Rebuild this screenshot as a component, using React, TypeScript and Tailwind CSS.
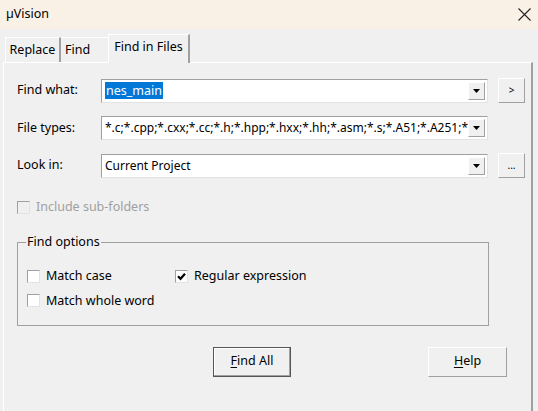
import React from "react";

// Find in Files dialog, classic Win32 look
const font = { fontFamily: '"Noto Sans", "Liberation Sans", sans-serif' };

const DropArrow = () => (
  <div className="w-[17px] h-full shrink-0 flex items-center justify-center bg-[#f0f0f0] border-t border-l border-t-white border-l-white border-b border-r border-b-[#a0a0a0] border-r-[#a0a0a0]">
    <svg width="7" height="4" viewBox="0 0 7 4">
      <path d="M0 0 H7 L3.5 4 Z" fill="#000" />
    </svg>
  </div>
);

const Combo = ({ children }: { children: React.ReactNode }) => (
  <div className="w-[387px] h-[24px] flex bg-white border border-t-[#a0a0a0] border-l-[#a0a0a0] border-b-[#e3e3e3] border-r-[#e3e3e3] p-[2px]">
    <div className="flex-1 flex items-center pl-[1px] overflow-hidden whitespace-nowrap text-[12px] text-black">
      {children}
    </div>
    <DropArrow />
  </div>
);

const SmallButton = ({ label }: { label: string }) => (
  <div className="ml-[10px] w-[27px] h-[25px] flex items-center justify-center bg-[#f0f0f0] border border-t-white border-l-white border-b-[#a0a0a0] border-r-[#a0a0a0] text-[10px] text-black">
    {label}
  </div>
);

const Check = ({
  checked,
  disabled,
  label,
}: {
  checked?: boolean;
  disabled?: boolean;
  label: string;
}) => (
  <div className="flex items-center">
    <div
      className={
        "w-[13px] h-[13px] flex items-center justify-center border border-t-[#a0a0a0] border-l-[#a0a0a0] border-b-[#e3e3e3] border-r-[#e3e3e3] " +
        (disabled ? "bg-[#f0f0f0]" : "bg-white")
      }
    >
      {checked && (
        <svg width="9" height="9" viewBox="0 0 9 9">
          <path d="M1 4.2 L3.5 6.8 L8 1.8" stroke="#000" strokeWidth="2.2" fill="none" />
        </svg>
      )}
    </div>
    <span
      className={
        "ml-[6px] text-[12.5px] " + (disabled ? "text-[#a0a0a0]" : "text-black")
      }
    >
      {label}
    </span>
  </div>
);

export default function App() {
  return (
    <div className="w-[538px] h-[411px] bg-[#f0f0f0] flex flex-col overflow-hidden" style={font}>
      {/* Title bar */}
      <div className="h-[29px] shrink-0 bg-[#f9f1e6] flex items-center justify-between pl-[6px] pr-[7px]">
        <span className="text-[12.5px] text-black">µVision</span>
        <svg width="13" height="13" viewBox="0 0 13 13">
          <path d="M0.5 0.5 L12.5 12.5 M12.5 0.5 L0.5 12.5" stroke="#222" strokeWidth="1.1" />
        </svg>
      </div>

      {/* Tabs */}
      <div className="h-[33px] shrink-0 flex items-end pl-[5px]">
        <div className="h-[25px] w-[56px] flex items-center justify-center bg-[#f0f0f0] border-t border-l border-t-white border-l-white border-r-2 border-r-[#a0a0a0] text-[12.5px] text-black">
          Replace
        </div>
        <div className="h-[25px] w-[47px] pl-[4px] flex items-center bg-[#f0f0f0] border-t border-t-white text-[12.5px] text-black">
          Find
        </div>
        <div className="h-[29px] w-[82px] flex items-start pt-[3px] justify-center bg-[#f0f0f0] border-t border-l border-t-white border-l-white border-r-2 border-r-[#a0a0a0] text-[12.5px] text-black mb-[-1px] relative z-10">
          Find in Files
        </div>
      </div>

      {/* Tab panel */}
      <div className="flex-1 ml-[3px] w-[530px] border-t border-l border-t-white border-l-white border-r-2 border-r-[#a0a0a0] pl-[13px] pt-[15px]">
        <div className="flex items-center">
          <span className="w-[84px] text-[12.5px] text-black">Find what:</span>
          <Combo>
            <span className="bg-[#0078d7] text-white px-[1px] leading-[17px] text-[12.5px]">nes_main</span>
          </Combo>
          <SmallButton label=">" />
        </div>

        <div className="flex items-center mt-[13px]">
          <span className="w-[84px] text-[12.5px] text-black">File types:</span>
          <Combo>*.c;*.cpp;*.cxx;*.cc;*.h;*.hpp;*.hxx;*.hh;*.asm;*.s;*.A51;*.A251;*.A166</Combo>
        </div>

        <div className="flex items-center mt-[13px]">
          <span className="w-[84px] text-[12.5px] text-black">Look in:</span>
          <Combo>Current Project</Combo>
          <SmallButton label="..." />
        </div>

        <div className="mt-[20px]">
          <Check disabled label="Include sub-folders" />
        </div>

        {/* Find options group */}
        <div className="relative mt-[25px] w-[472px] h-[84px] border border-[#a0a0a0]">
          <span className="absolute left-[8px] top-[-10px] px-[1px] bg-[#f0f0f0] text-[12.5px] text-black leading-[18px]">
            Find options
          </span>
          <div className="pl-[9px] pt-[24px] flex flex-col gap-[6px]">
            <div className="flex">
              <div className="w-[148px]">
                <Check label="Match case" />
              </div>
              <Check checked label="Regular expression" />
            </div>
            <Check label="Match whole word" />
          </div>
        </div>

        {/* Buttons */}
        <div className="flex mt-[21px]">
          <div className="ml-[196px] w-[78px] h-[30px] flex items-center justify-center bg-[#f0f0f0] border border-[#555] shadow-[inset_-1px_-1px_0_#a0a0a0,inset_1px_1px_0_#fff] text-[12.5px] text-black">
            <span>
              <span className="underline underline-offset-2">F</span>ind All
            </span>
          </div>
          <div className="ml-[137px] w-[79px] h-[30px] flex items-center justify-center bg-[#f0f0f0] border border-t-white border-l-white border-b-[#a0a0a0] border-r-[#a0a0a0] text-[12.5px] text-black">
            <span>
              <span className="underline underline-offset-2">H</span>elp
            </span>
          </div>
        </div>
      </div>
    </div>
  );
}
